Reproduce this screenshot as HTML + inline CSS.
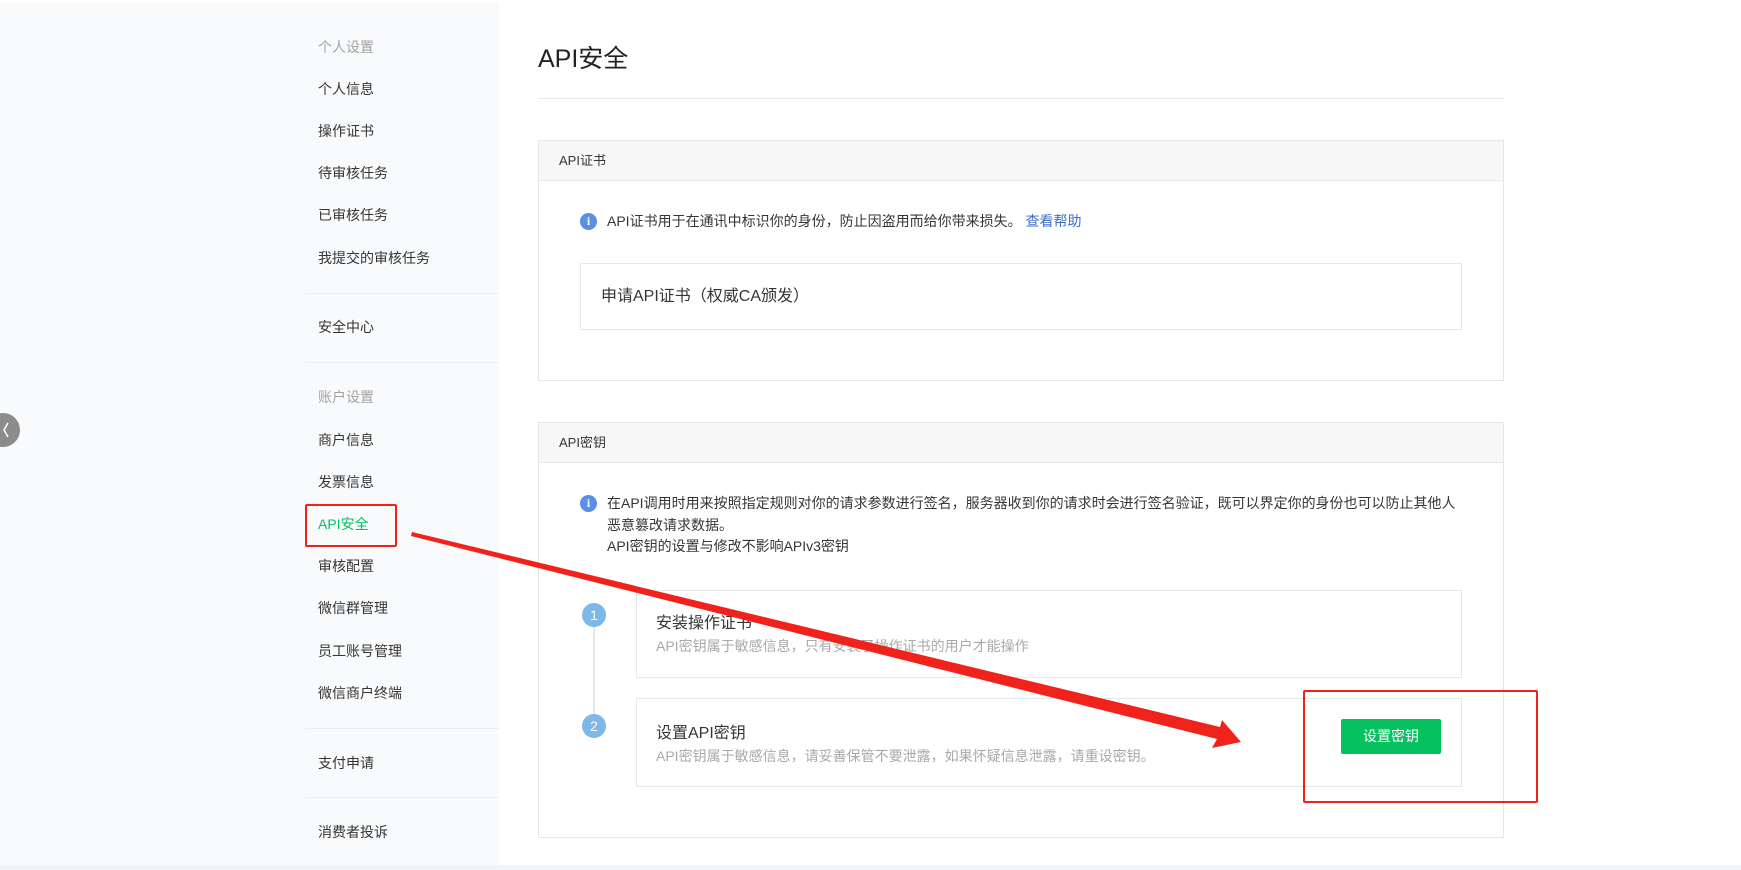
<!DOCTYPE html>
<html><head><meta charset="utf-8"><style>
*{margin:0;padding:0;box-sizing:border-box}
body{width:1741px;height:870px;background:#fff;position:relative;overflow:hidden;font-family:"Liberation Sans","Noto Sans CJK SC",sans-serif;color:#353535}
.a{position:absolute;white-space:nowrap}
.side{position:absolute;left:0;top:3px;width:499px;height:862px;background:#f9fafc}
.it{position:absolute;left:318px;font-size:14px;line-height:20px;color:#353535}
.gr{color:#a3a3a3}
.dv{position:absolute;left:305px;width:194px;height:1px;background:#ebedf0}
.card{position:absolute;left:538px;width:966px;border:1px solid #e6e6e6;background:#fff}
.hd{height:40px;background:#f7f7f7;border-bottom:1px solid #e8e8e8;font-size:13px;line-height:40px;padding-left:20px;color:#353535}
.ic{position:absolute;width:17px;height:17px;border-radius:50%;background:#5b8ee6;color:#fff;font-size:12px;font-weight:bold;text-align:center;line-height:17px;font-family:"Liberation Serif",serif}
.box{position:absolute;border:1px solid #e6e8ee;background:#fff}
.num{position:absolute;width:24px;height:24px;border-radius:50%;background:#7db8e8;color:#fff;font-size:14px;text-align:center;line-height:24px}
</style></head><body>
<div class="side"></div>
<div class="it gr" style="top:37px">个人设置</div>
<div class="it" style="top:79px">个人信息</div>
<div class="it" style="top:121px">操作证书</div>
<div class="it" style="top:163px">待审核任务</div>
<div class="it" style="top:205px">已审核任务</div>
<div class="it" style="top:248px">我提交的审核任务</div>
<div class="dv" style="top:293px"></div>
<div class="it" style="top:317px">安全中心</div>
<div class="dv" style="top:362px"></div>
<div class="it gr" style="top:387px">账户设置</div>
<div class="it" style="top:430px">商户信息</div>
<div class="it" style="top:472px">发票信息</div>
<div class="it" style="top:514px;color:#07c160">API安全</div>
<div class="it" style="top:556px">审核配置</div>
<div class="it" style="top:598px">微信群管理</div>
<div class="it" style="top:641px">员工账号管理</div>
<div class="it" style="top:683px">微信商户终端</div>
<div class="dv" style="top:728px"></div>
<div class="it" style="top:753px">支付申请</div>
<div class="dv" style="top:797px"></div>
<div class="it" style="top:822px">消费者投诉</div>
<div class="a" style="left:305px;top:504px;width:92px;height:43px;border:2px solid #f0231c;border-radius:2px"></div>
<div class="a" style="left:-14px;top:413px;width:34px;height:34px;border-radius:50%;background:#8c8c8c"></div>
<div class="a" style="left:0;top:865px;width:1741px;height:5px;background:#f2f3f5"></div>

<div class="a" style="left:538px;top:44px;font-size:25px;line-height:30px;color:#222">API安全</div>
<div class="a" style="left:538px;top:98px;width:966px;height:1px;background:#e8e8e8"></div>

<div class="card" style="top:140px;height:241px"><div class="hd">API证书</div></div>
<div class="ic" style="left:580px;top:213px">i</div>
<div class="a" style="left:607px;top:211px;font-size:14px;line-height:20px">API证书用于在通讯中标识你的身份，防止因盗用而给你带来损失。 <span style="color:#3f6fc7">查看帮助</span></div>
<div class="box" style="left:580px;top:263px;width:882px;height:67px"></div>
<div class="a" style="left:601px;top:286px;font-size:16px;line-height:22px">申请API证书（权威CA颁发）</div>

<div class="card" style="top:422px;height:416px"><div class="hd">API密钥</div></div>
<div class="ic" style="left:580px;top:495px">i</div>
<div class="a" style="left:607px;top:493px;font-size:14px;line-height:21.5px">在API调用时用来按照指定规则对你的请求参数进行签名，服务器收到你的请求时会进行签名验证，既可以界定你的身份也可以防止其他人<br>恶意篡改请求数据。<br>API密钥的设置与修改不影响APIv3密钥</div>
<div class="a" style="left:593px;top:615px;width:2px;height:111px;background:#e4e6ea"></div>
<div class="num" style="left:582px;top:603px">1</div>
<div class="num" style="left:582px;top:714px">2</div>
<div class="box" style="left:636px;top:590px;width:826px;height:88px"></div>
<div class="a" style="left:656px;top:613px;font-size:16px;line-height:22px">安装操作证书</div>
<div class="a" style="left:656px;top:636px;font-size:14px;line-height:20px;color:#a9a9a9">API密钥属于敏感信息，只有安装了操作证书的用户才能操作</div>
<div class="box" style="left:636px;top:698px;width:826px;height:89px"></div>
<div class="a" style="left:656px;top:723px;font-size:16px;line-height:22px">设置API密钥</div>
<div class="a" style="left:656px;top:746px;font-size:14px;line-height:20px;color:#a9a9a9">API密钥属于敏感信息，请妥善保管不要泄露，如果怀疑信息泄露，请重设密钥。</div>
<div class="a" style="left:1341px;top:719px;width:100px;height:35px;background:#07c160;border-radius:2px;color:#fff;font-size:14px;line-height:35px;text-align:center">设置密钥</div>
<div class="a" style="left:1303px;top:690px;width:235px;height:113px;border:2px solid #f0231c;border-radius:2px"></div>

<svg class="a" style="left:0;top:0" width="1741" height="870">
<polyline points="8,423 4,430 8,437" fill="none" stroke="#fff" stroke-width="1.5"/>
<polygon points="412,532 1220,727 1222,720 1241,742 1212,748 1217,739 411,536" fill="#f0231c"/>
</svg>
</body></html>
